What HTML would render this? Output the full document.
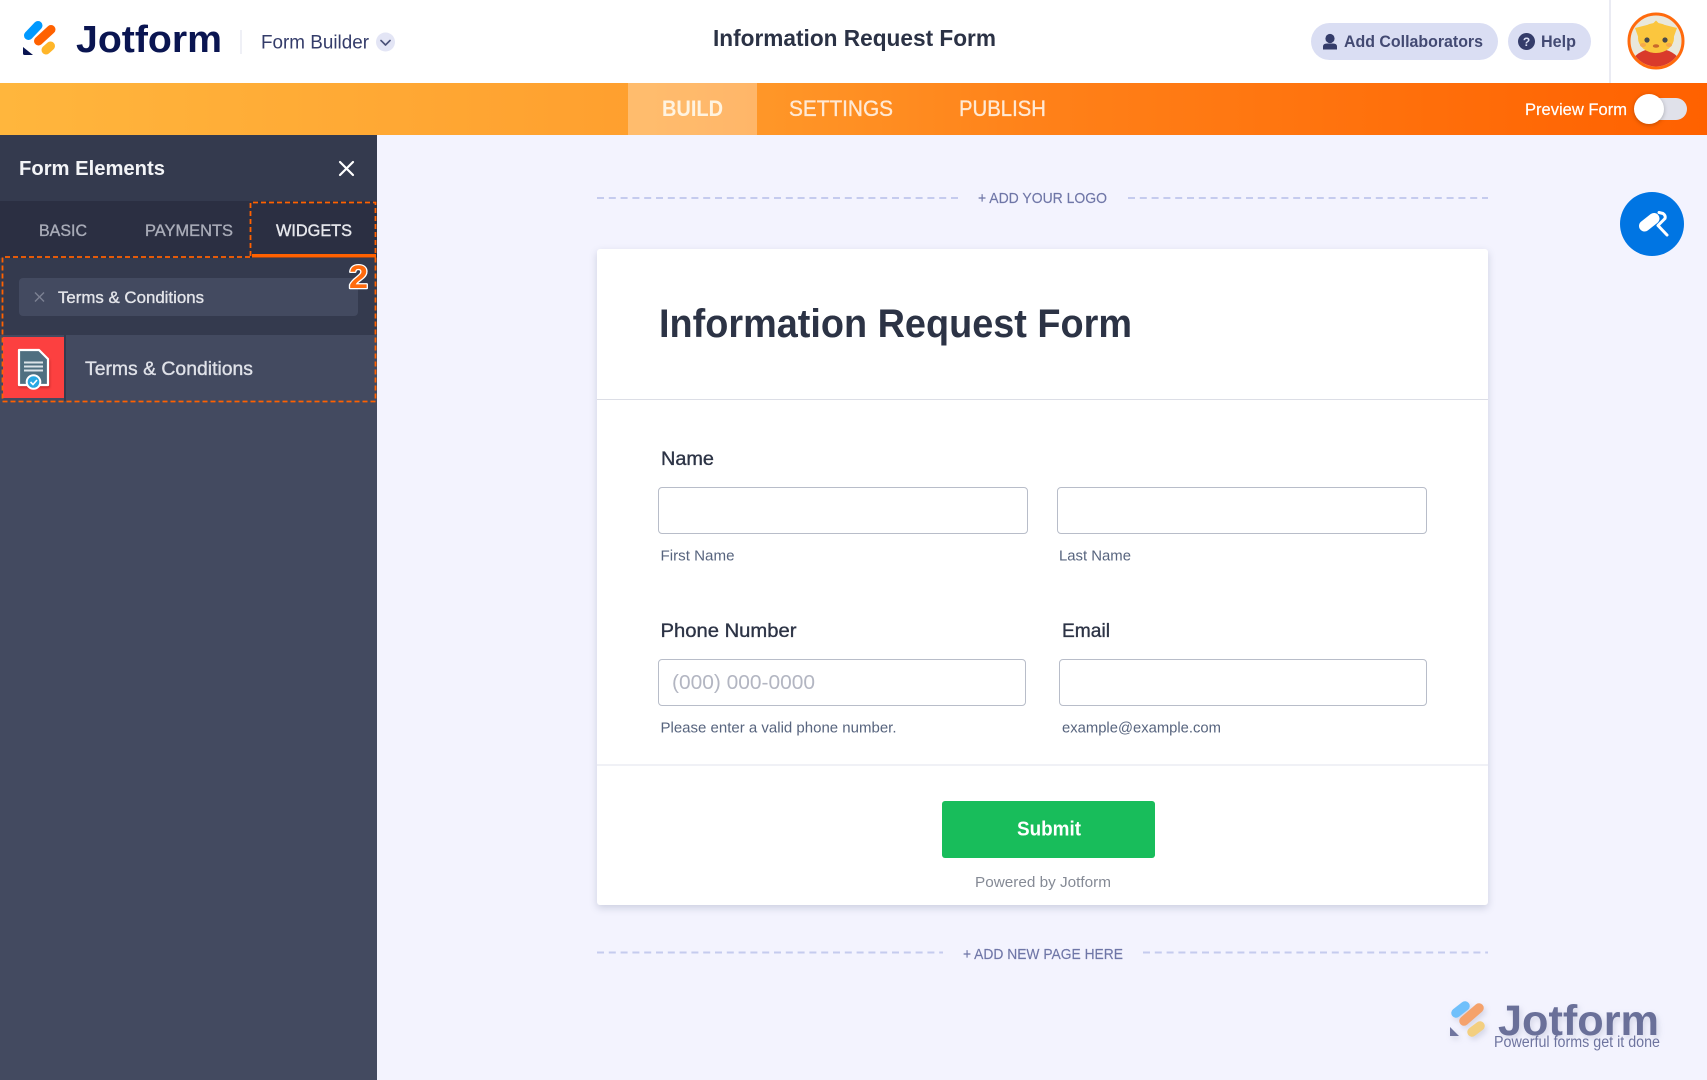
<!DOCTYPE html>
<html lang="en">
<head>
<meta charset="utf-8">
<title>Information Request Form</title>
<style>
html,body{margin:0;padding:0;width:1707px;height:1080px;overflow:hidden;background:#f3f3fe;font-family:"Liberation Sans",sans-serif}
.b{position:absolute;box-sizing:border-box}
svg{position:absolute;left:0;top:0}
text{font-family:"Liberation Sans",sans-serif}
.m{stroke-width:.35px}
</style>
</head>
<body>
<div class="b" style="left:0;top:0;width:1707px;height:83px;background:#fff"></div>
<div class="b" style="left:0;top:83px;width:1707px;height:52px;background:linear-gradient(90deg,#ffb63d 0%,#ff9f2e 38%,#ff8018 62%,#ff6100 100%)"></div>
<div class="b" style="left:628px;top:83px;width:129px;height:52px;background:rgba(255,255,255,.3)"></div>
<div class="b" style="left:1311px;top:23px;width:187px;height:37px;border-radius:19px;background:#dadef3"></div>
<div class="b" style="left:1508px;top:23px;width:83px;height:37px;border-radius:19px;background:#dadef3"></div>
<div class="b" style="left:1609px;top:0;width:2px;height:83px;background:#eaebf3"></div>

<div class="b" style="left:0;top:135px;width:377px;height:945px;background:#434a60"></div>
<div class="b" style="left:0;top:135px;width:377px;height:66px;background:#343a4e"></div>
<div class="b" style="left:0;top:201px;width:377px;height:57px;background:#2b2f42"></div>
<div class="b" style="left:0;top:258px;width:377px;height:77px;background:#343a4e"></div>
<div class="b" style="left:19px;top:278px;width:339px;height:38px;border-radius:4px;background:#434a60"></div>
<div class="b" style="left:3px;top:337px;width:61px;height:61px;background:#fc4040"></div>
<div class="b" style="left:64px;top:335px;width:2px;height:66px;background:#343a4e"></div>

<div class="b" style="left:597px;top:249px;width:891px;height:656px;background:#fff;border-radius:3px;box-shadow:0 3px 8px rgba(70,80,120,.22)"></div>
<div class="b" style="left:597px;top:399px;width:891px;height:1px;background:#dcdee6"></div>
<div class="b" style="left:597px;top:764px;width:891px;height:2px;background:#f0f1f6"></div>
<div class="b" style="left:658px;top:486.5px;width:370px;height:47.5px;border:1px solid #b8bdc9;border-radius:4px;background:#fff"></div>
<div class="b" style="left:1057px;top:486.5px;width:370px;height:47.5px;border:1px solid #b8bdc9;border-radius:4px;background:#fff"></div>
<div class="b" style="left:658px;top:658.5px;width:368px;height:47.5px;border:1px solid #b8bdc9;border-radius:4px;background:#fff"></div>
<div class="b" style="left:1059px;top:658.5px;width:368px;height:47.5px;border:1px solid #b8bdc9;border-radius:4px;background:#fff"></div>
<div class="b" style="left:942px;top:801px;width:213px;height:57px;border-radius:3px;background:#18bd5b"></div>

<svg width="1707" height="1080" viewBox="0 0 1707 1080" xmlns="http://www.w3.org/2000/svg">
  <!-- header logo -->
  <g fill="none" stroke-linecap="round" stroke-width="9">
    <path d="M28.5 35.5 38 25.5" stroke="#0099ff"/>
    <path d="M38.5 41 51 29.5" stroke="#ff6100"/>
    <path d="M46 50 50.5 46" stroke="#ffb629"/>
  </g>
  <path d="M23 47V53.5Q23 55 24.5 55H33Z" fill="#0a1551"/>
  <text x="76" y="52" font-size="38" font-weight="700" fill="#0a1551" textLength="146" lengthAdjust="spacingAndGlyphs">Jotform</text>
  <rect x="240.5" y="30" width="1" height="24" fill="#dfe1ee"/>
  <text x="261" y="48.5" font-size="19" fill="#343c6a" textLength="108" lengthAdjust="spacingAndGlyphs">Form Builder</text>
  <circle cx="385.5" cy="42" r="9.5" fill="#e3e5f5"/>
  <path d="M381 40.5 385.5 45 390 40.5" fill="none" stroke="#4a5178" stroke-width="1.6" stroke-linecap="round" stroke-linejoin="round"/>

  <text x="713" y="46" font-size="23" font-weight="700" fill="#2b3245" textLength="283" lengthAdjust="spacingAndGlyphs">Information Request Form</text>

  <!-- collaborators/help -->
  <circle cx="1330" cy="38.5" r="4.6" fill="#343c6a"/>
  <path d="M1323 49.5V46.5Q1323 43.5 1327 43.5H1333Q1337 43.5 1337 46.5V49.5Z" fill="#343c6a"/>
  <text x="1344" y="47" font-size="16.5" font-weight="700" fill="#434a73" textLength="139" lengthAdjust="spacingAndGlyphs">Add Collaborators</text>
  <circle cx="1526.5" cy="41.5" r="8.5" fill="#343c6a"/>
  <text x="1526.5" y="46" font-size="12" font-weight="700" fill="#dadef3" text-anchor="middle">?</text>
  <text x="1541" y="47" font-size="16.5" font-weight="700" fill="#434a73" textLength="35" lengthAdjust="spacingAndGlyphs">Help</text>

  <!-- avatar -->
  <circle cx="1656" cy="41" r="27" fill="#e9e8dc" stroke="#ff6a0d" stroke-width="3"/>
  <clipPath id="av"><circle cx="1656" cy="41" r="25.5"/></clipPath>
  <g clip-path="url(#av)">
    <path d="M1628 70Q1632 50 1656 48Q1680 50 1684 70Z" fill="#d93a2b"/>
    <path d="M1635 28 1647 25 1640 42Z" fill="#fbc63e"/>
    <path d="M1677 28 1665 25 1672 42Z" fill="#fbc63e"/>
    <path d="M1653 23.5 1656 20.5 1659 23.5Z" fill="#fbc63e"/>
    <ellipse cx="1656" cy="38" rx="18" ry="15" fill="#fbc63e"/>
    <ellipse cx="1643" cy="45" rx="3" ry="2" fill="#f6a94a"/>
    <ellipse cx="1669" cy="45" rx="3" ry="2" fill="#f6a94a"/>
    <circle cx="1647" cy="40" r="2.6" fill="#4a4a4a"/>
    <circle cx="1665" cy="40" r="2.6" fill="#4a4a4a"/>
    <ellipse cx="1656" cy="46" rx="3.2" ry="1.8" fill="#c9682c"/>
  </g>

  <!-- nav -->
  <text x="662" y="116" font-size="22" font-weight="700" fill="#fff3e0" textLength="61" lengthAdjust="spacingAndGlyphs">BUILD</text>
  <text x="789" y="116" font-size="22" fill="#ffe9d4" stroke="#ffe9d4" class="m" textLength="104" lengthAdjust="spacingAndGlyphs">SETTINGS</text>
  <text x="959" y="116" font-size="22" fill="#ffe9d4" stroke="#ffe9d4" class="m" textLength="87" lengthAdjust="spacingAndGlyphs">PUBLISH</text>
  <text x="1525" y="115" font-size="17" fill="#fff" stroke="#fff" stroke-width=".2" textLength="102" lengthAdjust="spacingAndGlyphs">Preview Form</text>
  <rect x="1640" y="98" width="47" height="22" rx="11" fill="#e0e1ea"/>
  <circle cx="1649" cy="109" r="15" fill="#fff" style="filter:drop-shadow(0 1px 2px rgba(0,0,0,.25))"/>

  <!-- sidebar -->
  <text x="19" y="175" font-size="20.5" font-weight="700" fill="#f3f4f7" textLength="146" lengthAdjust="spacingAndGlyphs">Form Elements</text>
  <path d="M340 162 353 175M353 162 340 175" stroke="#fff" stroke-width="2.2" stroke-linecap="round"/>
  <text x="39" y="236" font-size="17" fill="#a9acb8" stroke="#a9acb8" class="m" textLength="48" lengthAdjust="spacingAndGlyphs">BASIC</text>
  <text x="145" y="236" font-size="17" fill="#a9acb8" stroke="#a9acb8" class="m" textLength="88" lengthAdjust="spacingAndGlyphs">PAYMENTS</text>
  <text x="276" y="236" font-size="17" fill="#e6e7ec" stroke="#e6e7ec" stroke-width=".4" textLength="76" lengthAdjust="spacingAndGlyphs">WIDGETS</text>
  <rect x="252" y="254" width="124" height="3.5" fill="#ff6100"/>
  <path d="M250.5 256V202.5H375.5V256" fill="none" stroke="#ff6100" stroke-width="1.8" stroke-dasharray="5 3"/>
  <path d="M250 257H2.5V401.5H375.5V257" fill="none" stroke="#ff6100" stroke-width="1.8" stroke-dasharray="5 3"/>

  <path d="M35 292.5 44 301.5M44 292.5 35 301.5" stroke="#7c8193" stroke-width="1.4"/>
  <text x="58" y="303" font-size="17" fill="#e4e5ea" stroke="#e4e5ea" stroke-width=".35" textLength="146" lengthAdjust="spacingAndGlyphs">Terms &amp; Conditions</text>
  <text x="349" y="288" font-size="32" font-weight="700" fill="#ff6a0d" stroke="#fff" stroke-width="2.5" stroke-linejoin="round" paint-order="stroke" textLength="19" lengthAdjust="spacingAndGlyphs">2</text>

  <path d="M19 350H39L48 359V385H19Z" fill="#4f6f80" stroke="#fff" stroke-width="2.2" stroke-linejoin="round" style="filter:drop-shadow(1px 2px 1px rgba(120,20,20,.35))"/>
  <path d="M24 362.5H43M24 366.5H43M24 370.5H43" stroke="#dbe3e8" stroke-width="2"/>
  <circle cx="33.5" cy="382" r="6.8" fill="#29a8e2" stroke="#fff" stroke-width="2"/>
  <path d="M30.5 382 33 384.5 37 380" fill="none" stroke="#fff" stroke-width="1.6"/>
  <text x="85" y="375" font-size="19" fill="#dfe1e8" stroke="#dfe1e8" stroke-width=".35" textLength="168" lengthAdjust="spacingAndGlyphs">Terms &amp; Conditions</text>

  <!-- add logo -->
  <path d="M597 198H958M1128 198H1488" stroke="#c5cbee" stroke-width="2" stroke-dasharray="7 4.8"/>
  <text x="978" y="203" font-size="15" fill="#6f76a7" stroke="#6f76a7" stroke-width=".15" textLength="129" lengthAdjust="spacingAndGlyphs">+ ADD YOUR LOGO</text>

  <!-- roller -->
  <circle cx="1652" cy="224" r="32" fill="#0075e3"/>
  <path d="M1644.5 226 1654 218.5" stroke="#fff" stroke-width="11" stroke-linecap="round"/>
  <path d="M1659 212.5 1663 213.5Q1666 215.5 1665 218.5L1658 225.5 1667 235" fill="none" stroke="#fff" stroke-width="3" stroke-linecap="round" stroke-linejoin="round"/>

  <!-- form text -->
  <text x="659" y="337" font-size="40" font-weight="700" fill="#2c3345" textLength="473" lengthAdjust="spacingAndGlyphs">Information Request Form</text>
  <text x="661" y="465" font-size="19.5" fill="#2c3345" stroke="#2c3345" class="m" textLength="53" lengthAdjust="spacingAndGlyphs">Name</text>
  <text x="660.5" y="560.5" font-size="15" fill="#57647e" textLength="74" lengthAdjust="spacingAndGlyphs">First Name</text>
  <text x="1059" y="560.5" font-size="15" fill="#57647e" textLength="72" lengthAdjust="spacingAndGlyphs">Last Name</text>
  <text x="660.5" y="637" font-size="19.5" fill="#2c3345" stroke="#2c3345" class="m" textLength="136" lengthAdjust="spacingAndGlyphs">Phone Number</text>
  <text x="1062" y="637" font-size="19.5" fill="#2c3345" stroke="#2c3345" class="m" textLength="48" lengthAdjust="spacingAndGlyphs">Email</text>
  <text x="672" y="689" font-size="20" fill="#b3b6c2" textLength="143" lengthAdjust="spacingAndGlyphs">(000) 000-0000</text>
  <text x="660.5" y="732.5" font-size="15" fill="#57647e" textLength="236" lengthAdjust="spacingAndGlyphs">Please enter a valid phone number.</text>
  <text x="1062" y="732.5" font-size="15" fill="#57647e" textLength="159" lengthAdjust="spacingAndGlyphs">example@example.com</text>
  <text x="1017" y="835.5" font-size="20" font-weight="700" fill="#fff" textLength="64" lengthAdjust="spacingAndGlyphs">Submit</text>
  <text x="975" y="887" font-size="15" fill="#858a95" textLength="136" lengthAdjust="spacingAndGlyphs">Powered by Jotform</text>

  <!-- add page -->
  <path d="M597 952.5H943M1143 952.5H1488" stroke="#c5cbee" stroke-width="2" stroke-dasharray="7 4.8"/>
  <text x="963" y="959" font-size="15" fill="#6f76a7" stroke="#6f76a7" stroke-width=".15" textLength="160" lengthAdjust="spacingAndGlyphs">+ ADD NEW PAGE HERE</text>

  <!-- watermark -->
  <g style="filter:drop-shadow(2px 3px 3px rgba(90,100,140,.2))">
    <g fill="none" stroke-linecap="round" stroke-width="9.5">
      <path d="M1456 1013 1465 1006" stroke="#6fc0fb"/>
      <path d="M1464 1021 1479 1008" stroke="#f5a26b"/>
      <path d="M1472 1032 1480 1026" stroke="#f3cf80"/>
    </g>
    <path d="M1450 1027V1036H1459Z" fill="#6f759f"/>
    <text x="1498" y="1035" font-size="43" font-weight="700" fill="#6a7099" textLength="161" lengthAdjust="spacingAndGlyphs">Jotform</text>
  </g>
  <text x="1494" y="1047" font-size="15.3" fill="#6e749f" textLength="166" lengthAdjust="spacingAndGlyphs">Powerful forms get it done</text>
</svg>
</body>
</html>
